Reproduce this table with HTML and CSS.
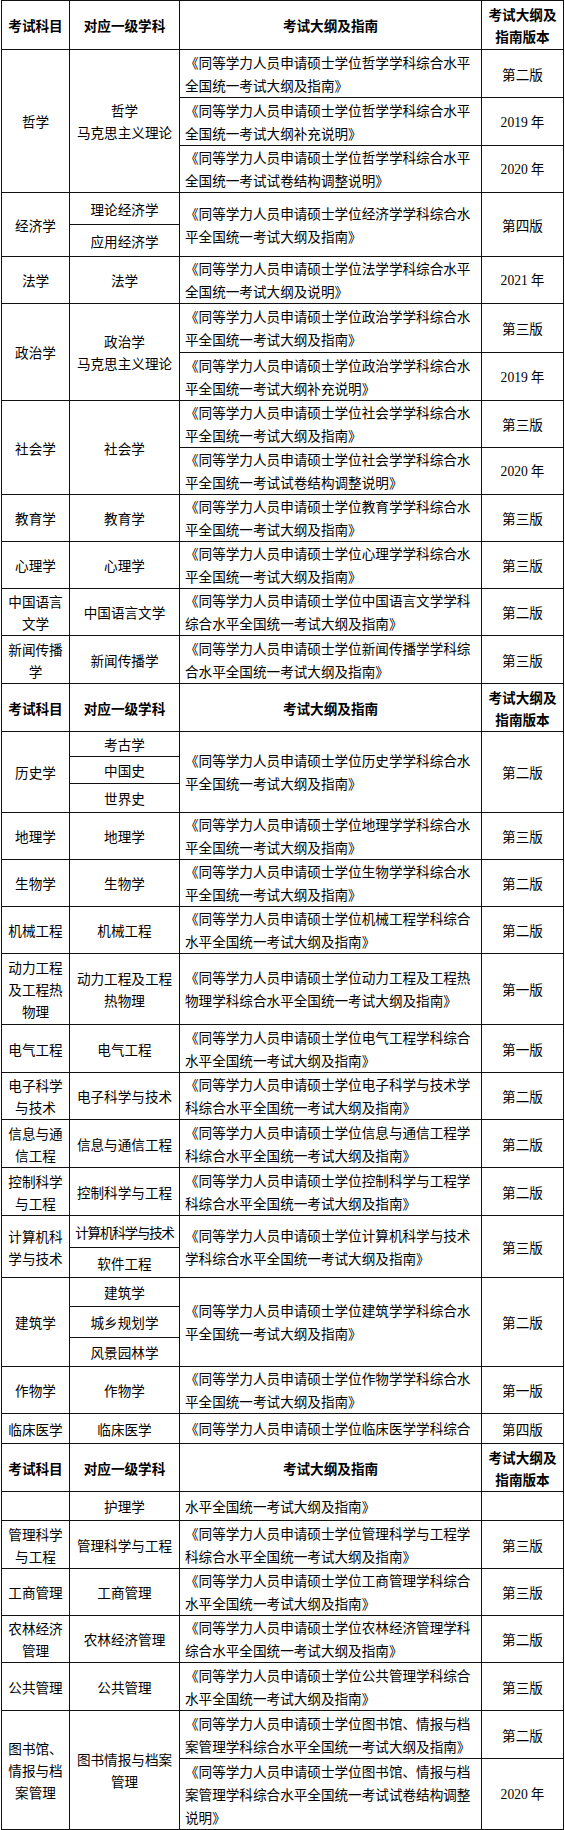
FILE: index.html
```html
<!DOCTYPE html>
<html lang="zh-CN">
<head>
<meta charset="utf-8">
<title>同等学力考试大纲</title>
<link rel="stylesheet" href="styles.css">
</head>
<body>
<table class="tbl">
<colgroup><col class="w1"><col class="w2"><col class="w3"><col class="w4"></colgroup>
<tbody>
<tr class="r49"><th>考试科目</th><th>对应一级学科</th><th>考试大纲及指南</th><th>考试大纲及<br>指南版本</th></tr>

<tr class="r48"><td rowspan="3">哲学</td><td rowspan="3">哲学<br>马克思主义理论</td><td class="g">《同等学力人员申请硕士学位哲学学科综合水平<br>全国统一考试大纲及指南》</td><td>第二版</td></tr>
<tr class="r48"><td class="g">《同等学力人员申请硕士学位哲学学科综合水平<br>全国统一考试大纲补充说明》</td><td><span class="yr">2019</span> 年</td></tr>
<tr class="r47"><td class="g">《同等学力人员申请硕士学位哲学学科综合水平<br>全国统一考试试卷结构调整说明》</td><td><span class="yr">2020</span> 年</td></tr>

<tr class="r32"><td rowspan="2">经济学</td><td>理论经济学</td><td rowspan="2" class="g">《同等学力人员申请硕士学位经济学学科综合水<br>平全国统一考试大纲及指南》</td><td rowspan="2">第四版</td></tr>
<tr class="r32"><td>应用经济学</td></tr>

<tr class="r47"><td>法学</td><td>法学</td><td class="g">《同等学力人员申请硕士学位法学学科综合水平<br>全国统一考试大纲及说明》</td><td><span class="yr">2021</span> 年</td></tr>

<tr class="r49"><td rowspan="2">政治学</td><td rowspan="2">政治学<br>马克思主义理论</td><td class="g">《同等学力人员申请硕士学位政治学学科综合水<br>平全国统一考试大纲及指南》</td><td>第三版</td></tr>
<tr class="r48"><td class="g">《同等学力人员申请硕士学位政治学学科综合水<br>平全国统一考试大纲补充说明》</td><td><span class="yr">2019</span> 年</td></tr>

<tr class="r47"><td rowspan="2">社会学</td><td rowspan="2">社会学</td><td class="g">《同等学力人员申请硕士学位社会学学科综合水<br>平全国统一考试大纲及指南》</td><td>第三版</td></tr>
<tr class="r47"><td class="g">《同等学力人员申请硕士学位社会学学科综合水<br>平全国统一考试试卷结构调整说明》</td><td><span class="yr">2020</span> 年</td></tr>

<tr class="r47"><td>教育学</td><td>教育学</td><td class="g">《同等学力人员申请硕士学位教育学学科综合水<br>平全国统一考试大纲及指南》</td><td>第三版</td></tr>
<tr class="r47"><td>心理学</td><td>心理学</td><td class="g">《同等学力人员申请硕士学位心理学学科综合水<br>平全国统一考试大纲及指南》</td><td>第三版</td></tr>
<tr class="r47"><td>中国语言<br>文学</td><td>中国语言文学</td><td class="g">《同等学力人员申请硕士学位中国语言文学学科<br>综合水平全国统一考试大纲及指南》</td><td>第二版</td></tr>
<tr class="r48"><td>新闻传播<br>学</td><td>新闻传播学</td><td class="g">《同等学力人员申请硕士学位新闻传播学学科综<br>合水平全国统一考试大纲及指南》</td><td>第三版</td></tr>

<tr class="r48"><th>考试科目</th><th>对应一级学科</th><th>考试大纲及指南</th><th>考试大纲及<br>指南版本</th></tr>

<tr class="r25"><td rowspan="3">历史学</td><td>考古学</td><td rowspan="3" class="g">《同等学力人员申请硕士学位历史学学科综合水<br>平全国统一考试大纲及指南》</td><td rowspan="3">第二版</td></tr>
<tr class="r27"><td>中国史</td></tr>
<tr class="r29"><td>世界史</td></tr>

<tr class="r47"><td>地理学</td><td>地理学</td><td class="g">《同等学力人员申请硕士学位地理学学科综合水<br>平全国统一考试大纲及指南》</td><td>第三版</td></tr>
<tr class="r47"><td>生物学</td><td>生物学</td><td class="g">《同等学力人员申请硕士学位生物学学科综合水<br>平全国统一考试大纲及指南》</td><td>第二版</td></tr>
<tr class="r47"><td>机械工程</td><td>机械工程</td><td class="g">《同等学力人员申请硕士学位机械工程学科综合<br>水平全国统一考试大纲及指南》</td><td>第二版</td></tr>
<tr class="r71"><td>动力工程<br>及工程热<br>物理</td><td>动力工程及工程<br>热物理</td><td class="g">《同等学力人员申请硕士学位动力工程及工程热<br>物理学科综合水平全国统一考试大纲及指南》</td><td>第一版</td></tr>
<tr class="r48"><td>电气工程</td><td>电气工程</td><td class="g">《同等学力人员申请硕士学位电气工程学科综合<br>水平全国统一考试大纲及指南》</td><td>第一版</td></tr>
<tr class="r47"><td>电子科学<br>与技术</td><td>电子科学与技术</td><td class="g">《同等学力人员申请硕士学位电子科学与技术学<br>科综合水平全国统一考试大纲及指南》</td><td>第二版</td></tr>
<tr class="r48"><td>信息与通<br>信工程</td><td>信息与通信工程</td><td class="g">《同等学力人员申请硕士学位信息与通信工程学<br>科综合水平全国统一考试大纲及指南》</td><td>第二版</td></tr>
<tr class="r48"><td>控制科学<br>与工程</td><td>控制科学与工程</td><td class="g">《同等学力人员申请硕士学位控制科学与工程学<br>科综合水平全国统一考试大纲及指南》</td><td>第二版</td></tr>

<tr class="r32"><td rowspan="2">计算机科<br>学与技术</td><td class="tight">计算机科学与技术</td><td rowspan="2" class="g">《同等学力人员申请硕士学位计算机科学与技术<br>学科综合水平全国统一考试大纲及指南》</td><td rowspan="2">第三版</td></tr>
<tr class="r30"><td>软件工程</td></tr>

<tr class="r29"><td rowspan="3">建筑学</td><td>建筑学</td><td rowspan="3" class="g">《同等学力人员申请硕士学位建筑学学科综合水<br>平全国统一考试大纲及指南》</td><td rowspan="3">第二版</td></tr>
<tr class="r31"><td>城乡规划学</td></tr>
<tr class="r29"><td>风景园林学</td></tr>

<tr class="r47"><td>作物学</td><td>作物学</td><td class="g">《同等学力人员申请硕士学位作物学学科综合水<br>平全国统一考试大纲及指南》</td><td>第一版</td></tr>
<tr class="r30"><td>临床医学</td><td>临床医学</td><td class="g">《同等学力人员申请硕士学位临床医学学科综合</td><td>第四版</td></tr>

<tr class="r48"><th>考试科目</th><th>对应一级学科</th><th>考试大纲及指南</th><th>考试大纲及<br>指南版本</th></tr>

<tr class="r29"><td></td><td>护理学</td><td class="g">水平全国统一考试大纲及指南》</td><td></td></tr>
<tr class="r48"><td>管理科学<br>与工程</td><td>管理科学与工程</td><td class="g">《同等学力人员申请硕士学位管理科学与工程学<br>科综合水平全国统一考试大纲及指南》</td><td>第三版</td></tr>
<tr class="r47"><td>工商管理</td><td>工商管理</td><td class="g">《同等学力人员申请硕士学位工商管理学科综合<br>水平全国统一考试大纲及指南》</td><td>第三版</td></tr>
<tr class="r47"><td>农林经济<br>管理</td><td>农林经济管理</td><td class="g">《同等学力人员申请硕士学位农林经济管理学科<br>综合水平全国统一考试大纲及指南》</td><td>第二版</td></tr>
<tr class="r48"><td>公共管理</td><td>公共管理</td><td class="g">《同等学力人员申请硕士学位公共管理学科综合<br>水平全国统一考试大纲及指南》</td><td>第三版</td></tr>

<tr class="r48"><td rowspan="2">图书馆、<br>情报与档<br>案管理</td><td rowspan="2">图书情报与档案<br>管理</td><td class="g">《同等学力人员申请硕士学位图书馆、情报与档<br>案管理学科综合水平全国统一考试大纲及指南》</td><td>第二版</td></tr>
<tr class="r71"><td class="g">《同等学力人员申请硕士学位图书馆、情报与档<br>案管理学科综合水平全国统一考试试卷结构调整<br>说明》</td><td><span class="yr">2020</span> 年</td></tr>
</tbody>
</table>
</body>
</html>
```

FILE: styles.css
```css
html, body {
  margin: 0;
  padding: 0;
  background: #ffffff;
}

body {
  font-family: "Noto Sans CJK SC", "Noto Sans", sans-serif;
  font-size: 13.6px;
  color: #000000;
}

.tbl {
  margin-left: 1px;
  border-collapse: collapse;
  table-layout: fixed;
  width: 563px;
}

.w1 { width: 68px; }
.w2 { width: 110px; }
.w3 { width: 302px; }
.w4 { width: 82px; }

.tbl th,
.tbl td {
  border: 1px solid #111111;
  padding: 0 3px;
  text-align: center;
  vertical-align: middle;
  line-height: 22px;
  white-space: nowrap;
}

.tbl th {
  font-weight: 700;
}

.tbl td.g {
  text-align: left;
  padding-left: 5px;
  padding-right: 0;
  line-height: 23px;
}

.tbl td.tight {
  letter-spacing: -1.3px;
  padding: 0;
}

.yr {
  font-family: "Liberation Serif", "Times New Roman", serif;
}

.r25 { height: 25px; }
.r27 { height: 27px; }
.r29 { height: 29px; }
.r30 { height: 30px; }
.r31 { height: 31px; }
.r32 { height: 32px; }
.r47 { height: 47px; }
.r48 { height: 48px; }
.r49 { height: 49px; }
.r71 { height: 71px; }
```
